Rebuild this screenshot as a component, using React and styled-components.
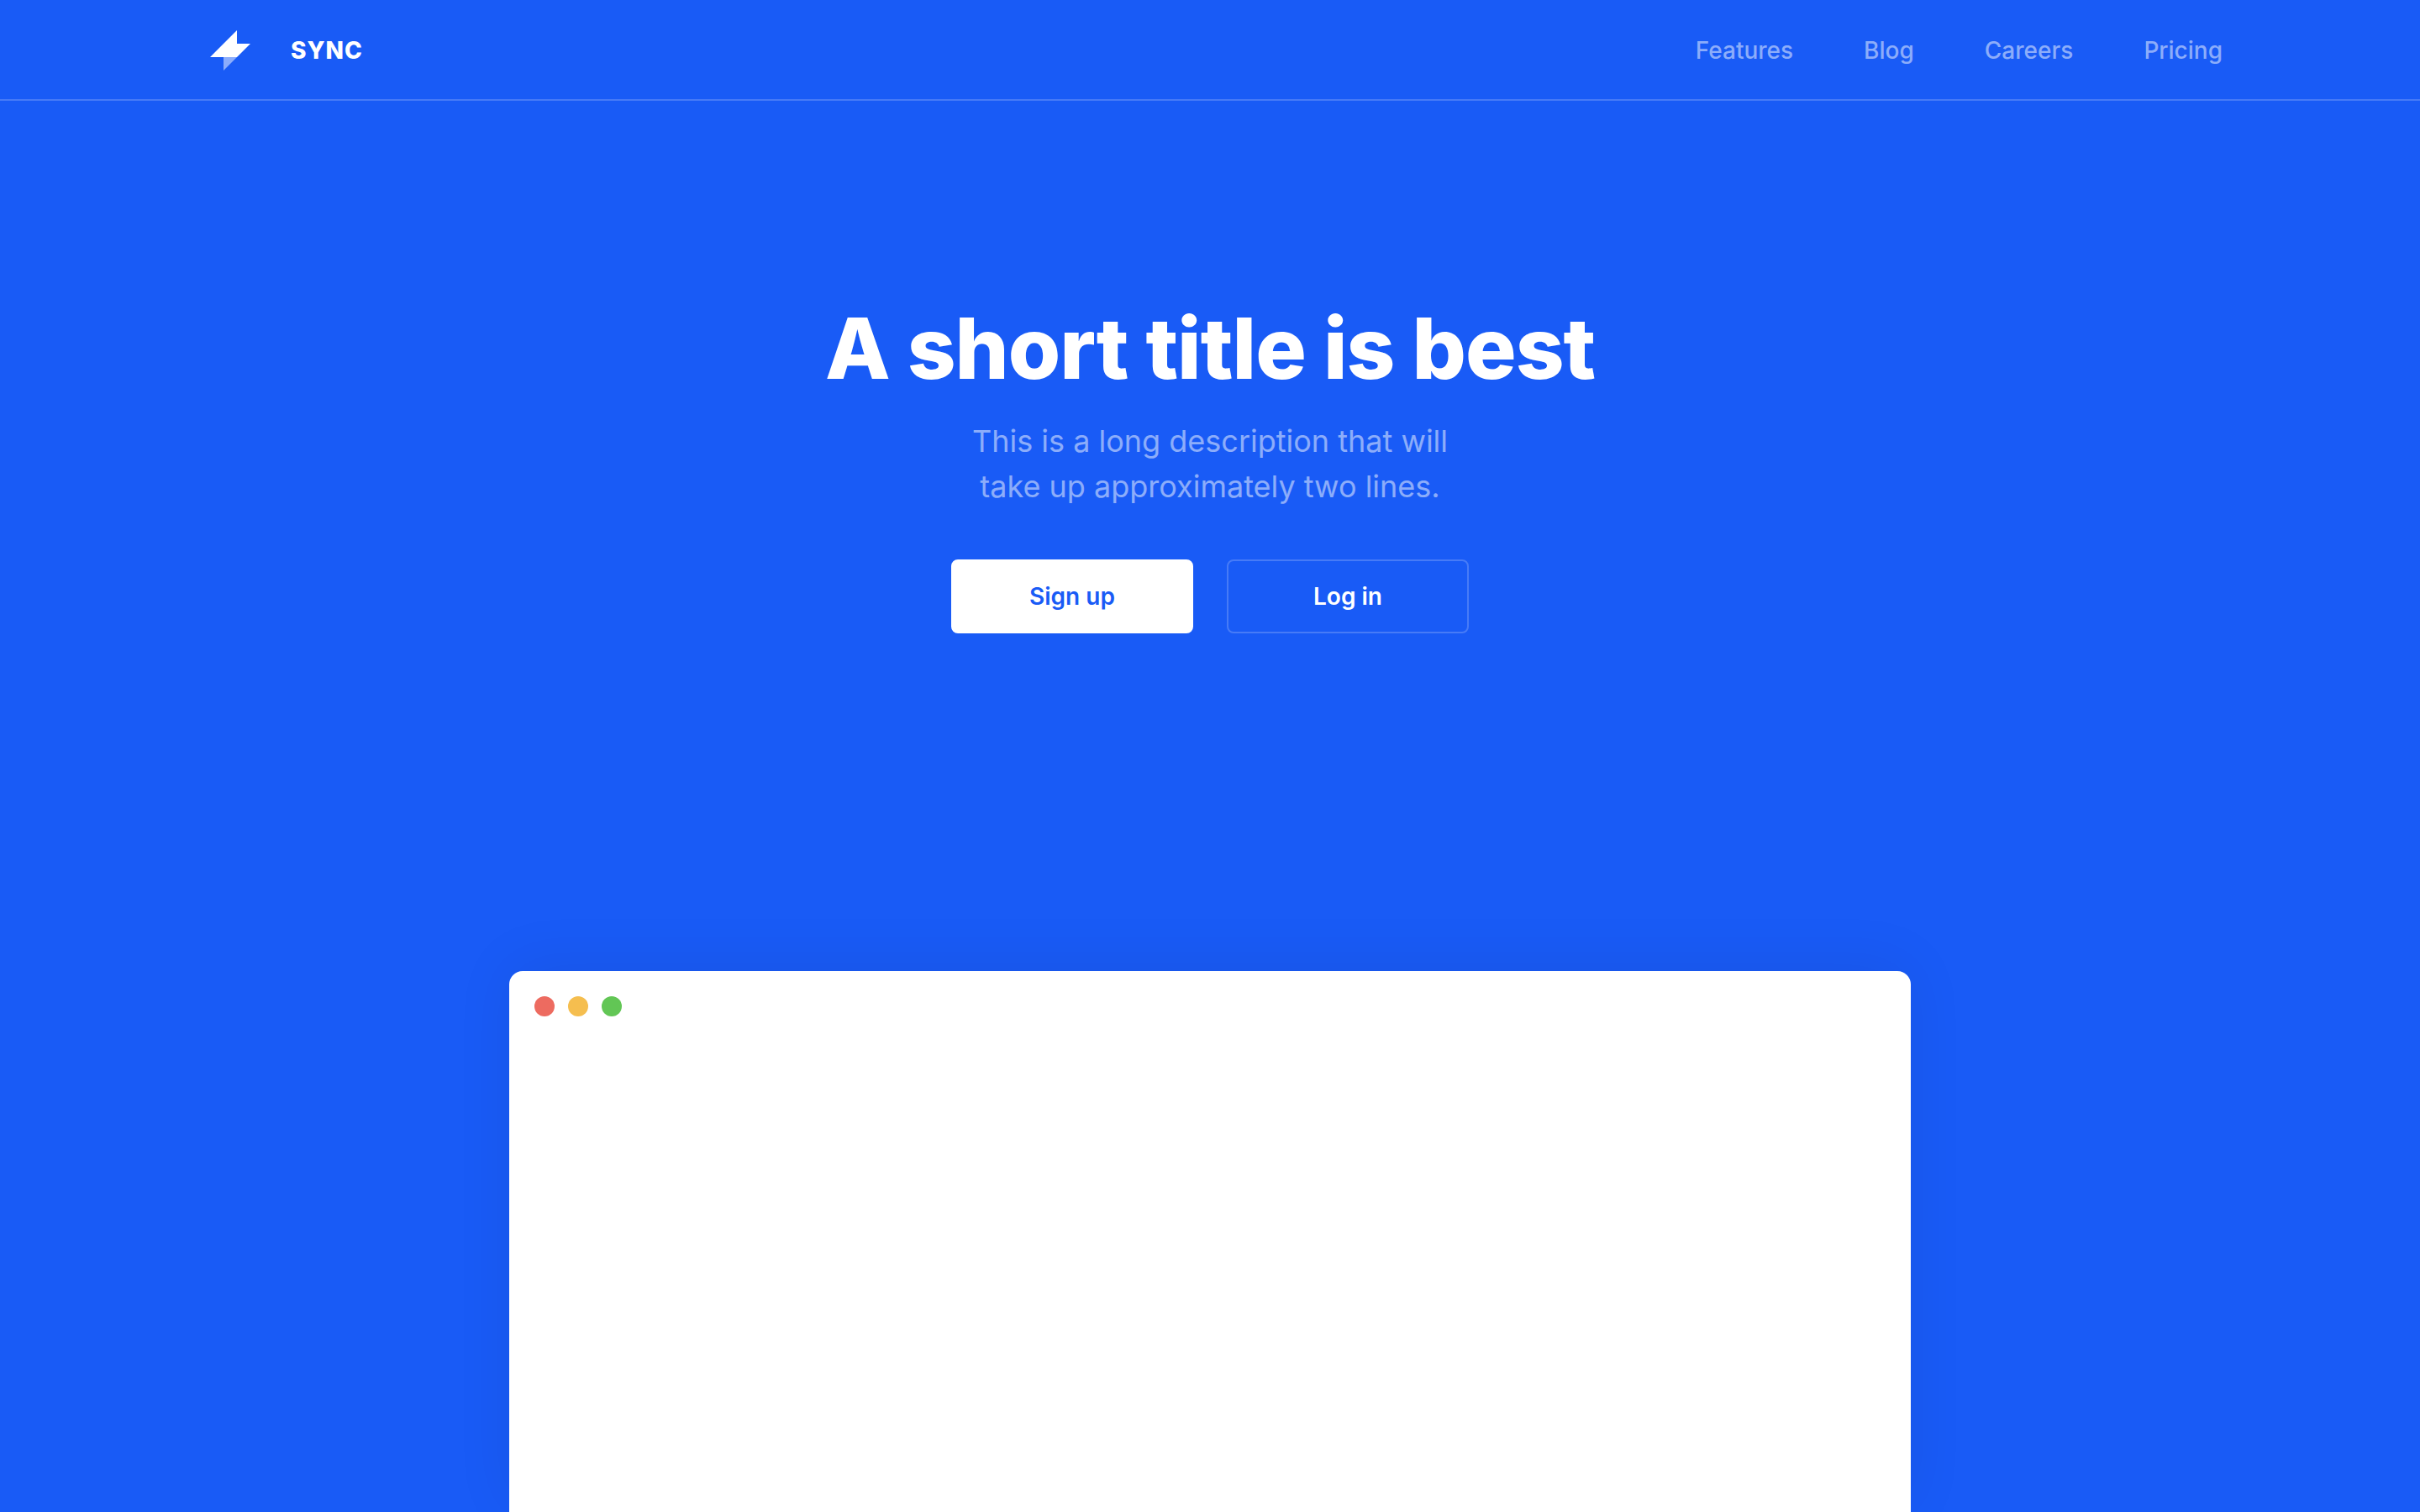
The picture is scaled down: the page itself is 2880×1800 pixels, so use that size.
import React from "react";
import styled, { createGlobalStyle } from "styled-components";

const GlobalStyle = createGlobalStyle`
  *, *::before, *::after { box-sizing: border-box; }
  body {
    margin: 0;
    background: #195bf6;
    color: #fff;
    font-family: Inter, "Liberation Sans", sans-serif;
    font-size: 28px;
  }
`;

const Page = styled.div`
  min-height: 100vh;
  display: flex;
  flex-direction: column;
  overflow: hidden;
`;

const Header = styled.header`
  border-bottom: 2px solid rgba(255, 255, 255, 0.2);
`;

const HeaderInner = styled.div`
  max-width: 2410px;
  min-height: 118px;
  margin: 0 auto;
  padding: 2px 0 0 15px;
  display: flex;
  align-items: center;
  justify-content: space-between;
`;

const Brand = styled.a`
  display: flex;
  align-items: center;
  gap: 48px;
  color: inherit;
  text-decoration: none;
  font-weight: 800;
  line-height: 40px;
  letter-spacing: 1px;
`;

const Nav = styled.nav`
  display: flex;
  gap: 84px;
`;

const NavLink = styled.a`
  color: rgba(255, 255, 255, 0.5);
  text-decoration: none;
  font-weight: 500;
  line-height: 40px;
`;

const Hero = styled.main`
  flex: 1;
  display: flex;
  flex-direction: column;
  align-items: center;
  padding: 234px 40px 0;
`;

const Title = styled.h1`
  margin: 0;
  font-size: 101px;
  font-weight: 800;
  line-height: 120px;
  letter-spacing: -1px;
  text-align: center;
`;

const Description = styled.p`
  margin: 24px 0 0;
  max-width: 600px;
  color: rgba(255, 255, 255, 0.5);
  font-size: 36px;
  line-height: 54px;
  text-align: center;
`;

const Actions = styled.div`
  display: flex;
  gap: 40px;
  margin-top: 60px;
`;

const Button = styled.button`
  width: 288px;
  height: 88px;
  border: 2px solid ${(p) => (p.$primary ? "#fff" : "rgba(255, 255, 255, 0.2)")};
  border-radius: 8px;
  background: ${(p) => (p.$primary ? "#fff" : "transparent")};
  color: ${(p) => (p.$primary ? "#195bf6" : "#fff")};
  font: inherit;
  font-weight: 600;
  cursor: pointer;
`;

const AppWindow = styled.section`
  flex: 1;
  width: 100%;
  max-width: 1668px;
  margin-top: 402px;
  border-radius: 16px 16px 0 0;
  background: #fff;
  box-shadow: 0 -8px 72px -4px rgba(0, 0, 0, 0.08);
`;

const TitleBar = styled.div`
  display: flex;
  gap: 16px;
  padding: 30px;
`;

const Dot = styled.span`
  width: 24px;
  height: 24px;
  border-radius: 50%;
  background: ${(p) => p.$color};
`;

const links = ["Features", "Blog", "Careers", "Pricing"];
const dots = ["#ed6b60", "#f5be4f", "#62c655"];

function Logo() {
  return (
    <svg width="48" height="48" viewBox="0 0 48 48" aria-hidden="true">
      <path d="M32 0V16H48L32 32H0Z" fill="#fff" />
      <path d="M16 32H32L16 48Z" fill="#fff" fillOpacity="0.5" />
    </svg>
  );
}

export default function App() {
  return (
    <>
      <GlobalStyle />
      <Page>
        <Header>
          <HeaderInner>
            <Brand href="#">
              <Logo />
              SYNC
            </Brand>
            <Nav>
              {links.map((label) => (
                <NavLink key={label} href={`#${label.toLowerCase()}`}>
                  {label}
                </NavLink>
              ))}
            </Nav>
          </HeaderInner>
        </Header>
        <Hero>
          <Title>A short title is best</Title>
          <Description>
            This is a long description that will take up approximately two lines.
          </Description>
          <Actions>
            <Button type="button" $primary>Sign up</Button>
            <Button type="button">Log in</Button>
          </Actions>
          <AppWindow>
            <TitleBar>
              {dots.map((color) => (
                <Dot key={color} $color={color} />
              ))}
            </TitleBar>
          </AppWindow>
        </Hero>
      </Page>
    </>
  );
}
